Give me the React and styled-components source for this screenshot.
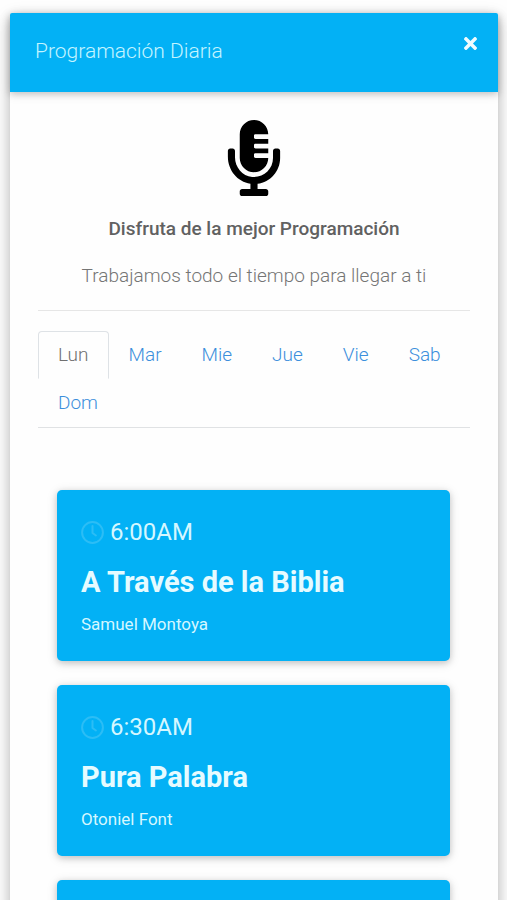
import React, { useState } from "react";
import styled, { createGlobalStyle } from "styled-components";
import { FaMicrophoneAlt, FaTimes } from "react-icons/fa";

const GlobalStyle = createGlobalStyle`
  *, *::before, *::after { box-sizing: border-box; }
  body {
    margin: 0;
    background: #fefefe;
    color: #757575;
    font-family: Roboto, "Liberation Sans", sans-serif;
    font-size: 19px;
    font-weight: 300;
    line-height: 28px;
  }
  h1, h2, h3, p, ul { margin: 0; padding: 0; }
`;

const Overlay = styled.div`
  height: 100vh;
  overflow: hidden auto;
  scrollbar-width: none;
  padding: 13px 9px 36px 10px;
`;

const Dialog = styled.section`
  background: #fefefe;
  border-radius: 2px;
  box-shadow: 0 6px 13px rgba(0, 0, 0, 0.18), 0 5px 18px rgba(0, 0, 0, 0.15);
`;

const Header = styled.header`
  display: flex;
  align-items: flex-start;
  justify-content: space-between;
  min-height: 79px;
  padding: 21px 18px 21px 25px;
  border-radius: 2px 2px 0 0;
  background: #03b1f5;
  box-shadow: 0 2px 6px rgba(0, 0, 0, 0.16), 0 2px 12px rgba(0, 0, 0, 0.12);
`;

const Title = styled.h1`
  color: #c4f4ff;
  font-size: 21px;
  font-weight: 300;
  line-height: 34px;
`;

const CloseButton = styled.button`
  display: flex;
  padding: 0;
  border: 0;
  background: none;
  color: #effcff;
  cursor: pointer;
`;

const Body = styled.div`
  padding: 28px;
`;

const Intro = styled.div`
  display: flex;
  flex-direction: column;
  align-items: center;
  gap: 19px;
  padding-bottom: 20px;
  border-bottom: 1px solid #e6e6e6;
  text-align: center;
`;

const Tagline = styled.h2`
  color: #616161;
  font-size: 19px;
  font-weight: 500;
  line-height: 28px;
`;

const Tabs = styled.div`
  display: flex;
  flex-wrap: wrap;
  margin-top: 20px;
  border-bottom: 1px solid #e0e2e4;
`;

const Tab = styled.button`
  height: 48px;
  padding: 0 19px;
  border: 1px solid ${(p) => (p.$active ? "#dee2e6" : "transparent")};
  border-bottom-color: transparent;
  border-radius: 4px 4px 0 0;
  background: none;
  color: ${(p) => (p.$active ? "#707070" : "#3c8fdc")};
  font: inherit;
  cursor: pointer;
`;

const Programs = styled.ul`
  display: flex;
  flex-direction: column;
  gap: 24px;
  padding: 62px 20px 0 19px;
  list-style: none;
`;

const Card = styled.li`
  min-height: 171px;
  padding: 24px;
  border-radius: 5px;
  background: #03b1f5;
  box-shadow: 0 2px 6px rgba(0, 0, 0, 0.16), 0 2px 12px rgba(0, 0, 0, 0.12);
`;

const Time = styled.p`
  display: flex;
  align-items: center;
  gap: 6px;
  color: #d5f7ff;
  font-size: 24px;
  font-weight: 400;
  line-height: 36px;
`;

const ClockDrawing = styled.svg`
  width: 23px;
  height: 23px;
  fill: none;
  stroke: #2cbdf5;
  stroke-width: 2;
  stroke-linecap: round;
  stroke-linejoin: round;
`;

const ProgramName = styled.h3`
  margin-top: 14px;
  color: #e6fbff;
  font-size: 29px;
  font-weight: 700;
  line-height: 36px;
`;

const Host = styled.p`
  margin-top: 12px;
  color: #d5f7ff;
  font-size: 17px;
  font-weight: 400;
  line-height: 25px;
`;

const days = ["Lun", "Mar", "Mie", "Jue", "Vie", "Sab", "Dom"];

const programs = [
  { time: "6:00AM", name: "A Través de la Biblia", host: "Samuel Montoya" },
  { time: "6:30AM", name: "Pura Palabra", host: "Otoniel Font" },
];

function ClockIcon() {
  return (
    <ClockDrawing viewBox="0 0 23 23" aria-hidden="true">
      <circle cx="11.5" cy="11.5" r="10.4" />
      <path d="M11.5 5v7l3.4 2.5" />
    </ClockDrawing>
  );
}

export default function App() {
  const [day, setDay] = useState("Lun");
  return (
    <>
      <GlobalStyle />
      <Overlay>
        <Dialog role="dialog" aria-labelledby="dialog-title">
          <Header>
            <Title id="dialog-title">Programación Diaria</Title>
            <CloseButton type="button" aria-label="Cerrar">
              <FaTimes size={19} />
            </CloseButton>
          </Header>
          <Body>
            <Intro>
              <FaMicrophoneAlt size={76} color="#000" />
              <Tagline>Disfruta de la mejor Programación</Tagline>
              <p>Trabajamos todo el tiempo para llegar a ti</p>
            </Intro>
            <Tabs role="tablist">
              {days.map((d) => (
                <Tab
                  key={d}
                  type="button"
                  role="tab"
                  aria-selected={d === day}
                  $active={d === day}
                  onClick={() => setDay(d)}
                >
                  {d}
                </Tab>
              ))}
            </Tabs>
            <Programs>
              {programs.map((p) => (
                <Card key={p.time}>
                  <Time>
                    <ClockIcon />
                    {p.time}
                  </Time>
                  <ProgramName>{p.name}</ProgramName>
                  <Host>{p.host}</Host>
                </Card>
              ))}
              <Card />
            </Programs>
          </Body>
        </Dialog>
      </Overlay>
    </>
  );
}
